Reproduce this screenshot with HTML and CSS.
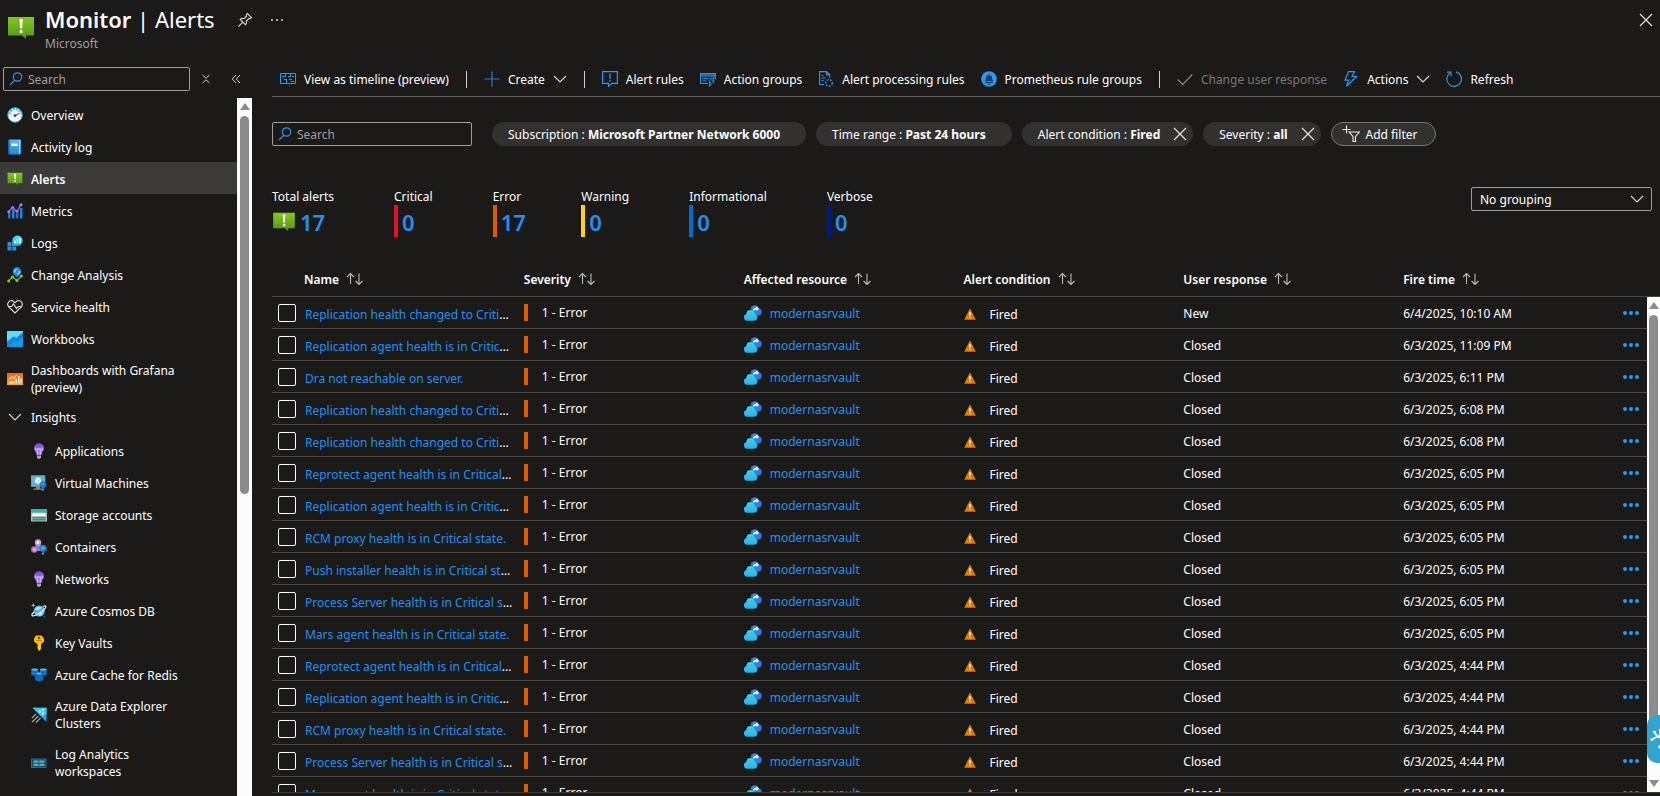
FILE: index.html
```html
<!DOCTYPE html>
<html lang="en">
<head>
    <meta charset="UTF-8">
    <meta name="viewport" content="width=device-width, initial-scale=1.0">
    <title>Monitor | Alerts</title>
    <link rel="stylesheet" href="styles.css">
</head>
<body>

    <svg class="sprite" aria-hidden="true">
        <defs>
            <linearGradient id="green" x1="0" y1="0" x2="0" y2="1"><stop offset="0" stop-color="#82c91e"/><stop offset="1" stop-color="#55921a"/></linearGradient>
            <linearGradient id="book" x1="0" y1="0" x2="0" y2="1"><stop offset="0" stop-color="#5db8f5"/><stop offset="1" stop-color="#1f88dd"/></linearGradient>
            <linearGradient id="purple" x1="0" y1="0" x2="0" y2="1"><stop offset="0" stop-color="#7a4fd0"/><stop offset="1" stop-color="#a67af4"/></linearGradient>
            <linearGradient id="cyan" x1="0" y1="0" x2="0" y2="1"><stop offset="0" stop-color="#50e6ff"/><stop offset="1" stop-color="#1f9fd0"/></linearGradient>
            <linearGradient id="wb" x1="0" y1="0" x2="0" y2="1"><stop offset="0" stop-color="#1aa0ef"/><stop offset="1" stop-color="#0c9ce8"/></linearGradient>
            <linearGradient id="graf" x1="0" y1="0" x2="0" y2="1"><stop offset="0" stop-color="#f0602a"/><stop offset="1" stop-color="#f7a614"/></linearGradient>
            <linearGradient id="cloud" x1="0" y1="0" x2="0" y2="1"><stop offset="0" stop-color="#3fd0f2"/><stop offset="1" stop-color="#28b4dc"/></linearGradient>
        </defs>
        <symbol id="i-alert" viewBox="0 0 28 24">
            <path d="M1 1h26v18.500h-8v3.500l-4-3.500H1z" fill="url(#green)"/>
            <path d="M12.500 3h3.200l-.5 9.500h-2.200zM12.700 14.200h2.800v2.800h-2.800z" fill="#fff"/>
        </symbol>
        <symbol id="i-search" viewBox="0 0 14 14">
            <path d="M5.700 8.300 1 13M12.700 5a4.200 4.200 0 1 1-8.400 0 4.200 4.200 0 0 1 8.400 0z" fill="none" stroke="#3490dc" stroke-width="1.200"/>
        </symbol>
        <symbol id="i-pin" viewBox="0 0 16 16">
            <path d="M10.300 1.500 14.500 5.700 13 6.700 11.800 6.500 9.300 9c.6 1.500.3 2.700-.8 3.800L3.200 7.500c1.100-1.100 2.300-1.400 3.800-.8l2.500-2.500-.2-1.200zM5.600 10.400 1.300 14.700" fill="none" stroke="#ddd" stroke-width="1.100"/>
        </symbol>
        <symbol id="i-more" viewBox="0 0 14 4"><path d="M1 1h2v2H1zM6 1h2v2H6zM11 1h2v2h-2z" fill="#a8a6a4"/></symbol>
        <symbol id="i-close" viewBox="0 0 14 14"><path d="M1 1l12 12M13 1 1 13" fill="none" stroke="#e8e8e8" stroke-width="1.100"/></symbol>
        <symbol id="i-chev" viewBox="0 0 14 8"><path d="M1 1l6 6 6-6" fill="none" stroke="#d8d8d8" stroke-width="1.100"/></symbol>
        <symbol id="i-updown" viewBox="0 0 10 10"><path d="M1.500 1 5 4.200 8.500 1M1.500 9 5 5.800 8.500 9" fill="none" stroke="#ccc"/></symbol>
        <symbol id="i-back" viewBox="0 0 10 10"><path d="M5 1 1.300 5 5 9M9 1 5.300 5 9 9" fill="none" stroke="#ccc"/></symbol>
        <symbol id="i-sort" viewBox="0 0 18 14">
            <path d="M4.500 12V1.500M1 5l3.500-3.500L8 5M13 1.500V12M9.500 9l3.500 3.500L16.500 9" fill="none" stroke="#bbb" stroke-width="1.100"/>
        </symbol>

        <symbol id="i-overview" viewBox="0 0 16 16">
            <circle cx="8" cy="8" r="7.300" fill="#f3f6f9" stroke="#3f8fc4"/>
            <path d="M2.500 7.500a5.500 5.500 0 0 1 11 0" fill="none" stroke="#3ccbf4" stroke-width="2.400" stroke-dasharray="2.200 .9"/>
            <path d="M8 8.500l4-2" stroke="#d13438" stroke-width="1.200"/><circle cx="8" cy="8.500" r="1.500" fill="#555"/>
        </symbol>
        <symbol id="i-log" viewBox="0 0 16 16">
            <rect x="1.500" y=".5" width="12.500" height="15" rx="1" fill="url(#book)"/><path d="M1.500 1.500a1 1 0 0 1 1-1V15.500a1 1 0 0 1-1-1z" fill="#1166aa"/>
            <path d="M12.500 1v14" stroke="#a9dcff"/><rect x="4.500" y="4.500" width="6" height="2.500" fill="#fff"/>
        </symbol>
        <symbol id="i-metrics" viewBox="0 0 16 16">
            <path d="M1 9h2.500v6.500H1zM9 10h2.500v5.500H9z" fill="#2b6cb8"/><path d="M5 6.500h2.500v9H5zM13 5h2.500v10.500H13z" fill="#1b86dc"/>
            <path d="M1.500 9 5.500 4.500l4.500 4L14 1.500" fill="none" stroke="#9a6be0" stroke-width="1.400"/>
            <g fill="#a97bea"><circle cx="1.700" cy="8.800" r="1.500"/><circle cx="5.700" cy="4.500" r="1.500"/><circle cx="10" cy="8.300" r="1.500"/><circle cx="14" cy="1.800" r="1.600"/></g>
        </symbol>
        <symbol id="i-logs" viewBox="0 0 16 16">
            <path d="M.5 7h4v4h-4zM.5 11.600h4V15.500h-4zM5.200 11.600h4V15.500h-4zM5.200 8h4v3h-4z" fill="#2f8ee0"/>
            <path d="M10.500.5a5.200 5.200 0 1 1 0 10.400H5.300V5.700A5.200 5.200 0 0 1 10.500.5z" fill="url(#cyan)"/>
            <path d="M8 5.500v3M10.500 4v4.500M13 3v5.500" stroke="#fff" stroke-width="1.400"/>
        </symbol>
        <symbol id="i-change" viewBox="0 0 16 16">
            <path d="M1.500 14l4-4 4.500 3.500L14.500 9" fill="none" stroke="#6bb22c" stroke-width="1.500"/>
            <g fill="#86cc2c"><circle cx="1.700" cy="14" r="1.500"/><circle cx="5.500" cy="10" r="1.500"/><circle cx="10" cy="13.500" r="1.500"/><circle cx="14.400" cy="9" r="1.500"/></g>
            <path d="M10 0a4.600 4.600 0 0 1 2 8.500L10 10.500 8 8.500A4.600 4.600 0 0 1 10 0z" fill="#1a86dd"/>
            <path d="M7.800 5.500V3.500a1.500 1.500 0 0 1 2.500-.5M12.300 4v2a1.500 1.500 0 0 1-2.500.5" fill="none" stroke="#fff"/>
        </symbol>
        <symbol id="i-health" viewBox="0 0 16 16">
            <path d="M8 14 1.800 7.800a3.700 3.700 0 0 1 0-5 3.700 3.700 0 0 1 5.200 0l1 1 1-1a3.700 3.700 0 0 1 5.200 0 3.700 3.700 0 0 1 0 5zM1 7.500h3.500L6.500 5l3 4.500 1.700-2H15" fill="none" stroke="#e3e3e3" stroke-width="1.100"/>
        </symbol>
        <symbol id="i-workbooks" viewBox="0 0 16 16">
            <rect width="16" height="16" rx=".6" fill="url(#wb)"/><path d="M0 0h16v1.500L9.500 7 6.500 5.500 0 11z" fill="#5fdcfb"/><path d="M0 11l6.500-5.500 3 1.500L16 1.500V6l-6 5-3-1-7 6z" fill="#1b80d8"/>
        </symbol>
        <symbol id="i-grafana" viewBox="0 0 16 16">
            <rect y="2" width="16" height="12" fill="url(#graf)"/><path d="M2 8.500l3-3 2 2 2.500-3.500" fill="none" stroke="#fff"/>
            <path d="M2 10.500h5.500V12.500H2zM8.500 8h1.500v4.500H8.500zM11 5h1.500v7.500H11zM13.300 7.500h1.300v5h-1.300z" fill="#ffe9d8"/>
        </symbol>
        <symbol id="i-bulb" viewBox="0 0 16 16">
            <path d="M8 .3a5 5 0 0 1 5 5c0 2.800-2.300 3.700-2.600 6.700H5.600C5.300 9 3 8.100 3 5.300a5 5 0 0 1 5-5z" fill="url(#purple)"/>
            <path d="M6.700 11.500V5.500M9.300 11.500V5.500M5.300 4.600a1.200 1.200 0 1 0 1.400 1.200h2.600a1.200 1.200 0 1 0 1.400-1.200" fill="none" stroke="#e2d3ff" stroke-width=".9"/>
            <path d="M6 12.500h4v2L9 15.700H7l-1-1.200z" fill="#a9a9a9"/>
        </symbol>
        <symbol id="i-vm" viewBox="0 0 16 16">
            <rect x=".4" y=".8" width="13.500" height="10.500" fill="#59b4d9" stroke="#9aa0a4" stroke-width=".8"/><path d="M5 12h4v1.500h2.500v1.300h-9v-1.300H5z" fill="#8a8a8a"/>
            <path d="M7 2.200l3 1.700v3.300L7 9 4 7.200V3.900z" fill="#fff"/><path d="M4 3.900l3 1.700v3.400M7 5.600l3-1.700" fill="none" stroke="#8fcde8" stroke-width=".8"/>
            <path d="M12 6.200a3.600 3.600 0 0 1 1.600 6.700h-3.200A3.600 3.600 0 0 1 12 6.200z" fill="#1379ce"/><path d="M10.800 13.300h2.400v2.400h-2.400z" fill="#5b7f9e"/><path d="M10.500 9h3" stroke="#7ec4f5"/>
        </symbol>
        <symbol id="i-storage" viewBox="0 0 16 16">
            <rect y="2" width="16" height="12.500" fill="#b8bcbc"/><path d="M0 2h16v3.500H0z" fill="#2fb9ac"/><path d="M1.500 6.500h13V9h-13z" fill="#fff"/><path d="M1.500 10h13v1.500h-13zM1.500 12h13v1.500h-13z" fill="#24968c"/>
        </symbol>
        <symbol id="i-containers" viewBox="0 0 16 16">
            <path d="M7 4 3.500 11H12z" fill="#a975bd" stroke="#a975bd" stroke-width="2"/>
            <circle cx="7" cy="3.500" r="3.200" fill="#c79bd6"/><circle cx="3.300" cy="10.500" r="3.200" fill="#a975bd"/><circle cx="7" cy="3.500" r="1.300" fill="#fff"/><circle cx="3.300" cy="10.500" r="1.200" fill="#efdff5"/>
            <path d="M12 5.700a3.700 3.700 0 0 1 1.600 7h-3.200a3.700 3.700 0 0 1 1.600-7z" fill="#1b86dc"/><path d="M10.800 13.300h2.400v2.400h-2.400z" fill="#5b7f9e"/><path d="M10.500 9h3" stroke="#9fd3fa"/>
        </symbol>
        <symbol id="i-cosmos" viewBox="0 0 16 16">
            <circle cx="8.300" cy="8" r="5.600" fill="#59b3dd"/><path d="M5 5c2-2 4-1 5.500-1S9 7 6.500 7 4 6.500 5 5zM8 10.500l4-1.500-1 3-3 1z" fill="#b9e2f5"/>
            <path d="M12 3.500c3.500-1.500 4 .3.500 3.500C9 10.300 3 13.800 1.200 12.700c-1-.8.500-2.600 2-4" fill="none" stroke="#e8eef2" stroke-width="1.200"/>
            <path d="M2.300 0l.6 1.700 1.700.6-1.700.6L2.300 4.600l-.6-1.700L0 2.300l1.700-.6z" fill="#b8d432"/><circle cx="13.500" cy="13.500" r=".9" fill="#0072c6"/>
        </symbol>
        <symbol id="i-key" viewBox="0 0 16 16">
            <path d="M5 .6h5.500L13 3.500v3L10 9.300V14l-1.700 2L6.500 14V9.300L3 6.500v-3z" fill="#fdb913"/><path d="M8.600 9.500V14.500" stroke="#ffd96b"/><circle cx="8" cy="3" r="1.300" fill="#5c4a16"/><path d="M5 5.500h6" stroke="#c98b05"/>
        </symbol>
        <symbol id="i-redis" viewBox="0 0 16 16">
            <path d="M.3 2.500v5c0 1.500 6.700 1.500 6.700 0v-5zM9 2.500v5c0 1.500 6.700 1.500 6.700 0v-5z" fill="#1173c9"/><path d="M4 5.500v7c0 2.200 8 2.200 8 0v-7z" fill="#0f6cbf"/>
            <ellipse cx="3.700" cy="2.500" rx="3.300" ry="1.100" fill="#4cc4ee"/><ellipse cx="12.300" cy="2.500" rx="3.300" ry="1.100" fill="#4cc4ee"/><ellipse cx="8" cy="6.500" rx="2.600" ry=".9" fill="#4cc4ee"/>
        </symbol>
        <symbol id="i-adx" viewBox="0 0 16 16">
            <path d="M1.500.8H15.500V15z" fill="#2f9fe8"/><path d="M1.500.8H15.500V7L11 10z" fill="#43c6f5"/><path d="M8 3.500h2v2H8zM11 2h2v2h-2zM11 5.500h2v2h-2z" fill="#c3f1ff"/>
            <path d="M1 11l4-4M1 15l6.500-6M5 15.500l4.500-4.500" stroke="#a3a3a3" stroke-width="1.200"/>
        </symbol>
        <symbol id="i-law" viewBox="0 0 16 16">
            <rect x=".5" y="4" width="14.500" height="8.500" fill="#1c4a63" stroke="#2a6b8e"/><path d="M2.500 5.500h5v2.200h-5zM8.300 5.500h5v2.200h-5zM2.500 8.800h5V11h-5zM8.300 8.800h5V11h-5z" fill="#59a9cf"/>
        </symbol>

        <symbol id="i-timeline" viewBox="0 0 16 16">
            <path d="M.5 2.500h15v10H.5z" fill="none" stroke="#2899f5"/>
            <path d="M5.500 3v3M2 5.500h4M10.500 3v2M8 5.500h3M12 5.500h2M4 8.500h3M9 8.500h3M6.500 9v3.500M10.500 10.500h3.500" fill="none" stroke="#2899f5"/>
        </symbol>
        <symbol id="i-plus" viewBox="0 0 16 16"><path d="M8 .5v15M.5 8h15" stroke="#2b7fc7" stroke-width="1.200"/></symbol>
        <symbol id="i-rules" viewBox="0 0 16 16"><path d="M.6.6h14.800v11.800H10L6.500 15.400v-3H.6zM8 2.500v5.500M8 9v1.500" fill="none" stroke="#2899f5" stroke-width="1.200"/></symbol>
        <symbol id="i-groups" viewBox="0 0 16 16">
            <path d="M8 12.500H.6v-10h14.800v6" fill="none" stroke="#2899f5" stroke-width="1.100"/><path d="M.6 2.500h14.800V5H.6z" fill="#1d5f9c" stroke="#2899f5"/>
            <path d="M2.500 7.500h6M2.500 10h4M11 7h3l-1.500 3h2L9 15.500l1.500-4H9z" fill="none" stroke="#2899f5"/>
        </symbol>
        <symbol id="i-processing" viewBox="0 0 16 16">
            <path d="M6 13.500H1.600V.6h7l3 3V7M8.500.6v3h3M3.500 4.500h2M3.500 7h4M3.500 9.500h2" fill="none" stroke="#2899f5" stroke-width="1.100"/><circle cx="11" cy="12" r="3.300" fill="none" stroke="#2899f5" stroke-width="1.200" stroke-dasharray="2 1.200"/>
        </symbol>
        <symbol id="i-prometheus" viewBox="0 0 16 16">
            <circle cx="8" cy="8" r="7.800" fill="#2899f5"/><path d="M4 10V8.500L5 9V6l1-2 .8 2L8 2l1.200 4 .8-2 1 2v3l1-.5V10zM4 10.800h8V12H4zM6 12.800h4c-.5 1.300-3.500 1.300-4 0z" fill="#163a5c"/>
        </symbol>
        <symbol id="i-check" viewBox="0 0 16 16"><path d="M.7 8.500l5 5L15.300 3.500" fill="none" stroke="#8a8a8a" stroke-width="1.200"/></symbol>
        <symbol id="i-bolt" viewBox="0 0 16 16"><path d="M5.500.6h6L9 5.500h4.500L3.500 15.300l2.300-6.200H2z" fill="none" stroke="#2899f5" stroke-width="1.200"/></symbol>
        <symbol id="i-refresh" viewBox="0 0 16 16"><path d="M10 .9A7.300 7.300 0 1 1 3.700 2.200M1 1.200h4V5.200" fill="none" stroke="#2899f5" stroke-width="1.200"/></symbol>
        <symbol id="i-filter" viewBox="0 0 18 18"><path d="M4.500.5v8M.5 4.500h8M7 7h10.500L13.500 11.500v5h-2.500v-5z" fill="none" stroke="#eee" stroke-width="1.100"/></symbol>

        <symbol id="i-vault" viewBox="0 0 18 16">
            <path d="M11 .3a4 4 0 0 1 3.800 3 3.700 3.700 0 0 1-.6 7.300H9V6L6.500 4A4.600 4.600 0 0 1 11 .3z" fill="#2b82e0"/><path d="M9 5c1-2 2.500-2.500 3.500-2.200V1.500l2.500 2.200-2.500 2.200V4.500C11.200 4.400 10.500 5 10 6z" fill="#fff"/>
            <path d="M6.500 5a4.300 4.300 0 0 1 4.200 3.700 3.500 3.500 0 0 1 2.500 3.600A3.400 3.400 0 0 1 10 15.800H3.600A3.500 3.500 0 0 1 2.300 9 4.300 4.300 0 0 1 6.500 5z" fill="url(#cloud)"/>
        </symbol>
        <symbol id="i-warn" viewBox="0 0 12 12"><path d="M6 .3 11.800 11.700H.2z" fill="#e07a0c"/><path d="M5.400 4h1.200v4H5.400zM5.400 9h1.200v1.300H5.400z" fill="#fff"/></symbol>
        <symbol id="i-help" viewBox="0 0 22 24"><path d="M1 13l13-7M4.500 5l3 5M10 2v8M8 10l7 2" fill="none" stroke="#fff" stroke-width="1.600"/><circle cx="4.500" cy="5" r="1.500" fill="#fff"/><circle cx="2" cy="12.500" r="1.500" fill="#fff"/><circle cx="10" cy="20" r="1.800" fill="#fff"/></symbol>
    </svg>

    <header class="page-header">
        <svg class="header-icon"><use href="#i-alert"/></svg>
        <div class="header-text">
            <h1><b>Monitor</b> | Alerts</h1>
            <p>Microsoft</p>
        </div>
        <div class="header-tools">
            <button aria-label="Pin"><svg class="icon"><use href="#i-pin"/></svg></button>
            <button aria-label="More"><svg class="icon-more"><use href="#i-more"/></svg></button>
        </div>
        <button class="close-page" aria-label="Close"><svg class="icon-close"><use href="#i-close"/></svg></button>
    </header>

    <div class="layout">
        <aside class="sidebar">
            <div class="menu-tools">
                <label class="search-box menu-search">
                    <svg class="icon-search"><use href="#i-search"/></svg>
                    <input type="text" placeholder="Search" aria-label="Search menu">
                </label>
                <button aria-label="Collapse groups"><svg class="icon-small"><use href="#i-updown"/></svg></button>
                <button aria-label="Hide menu"><svg class="icon-small"><use href="#i-back"/></svg></button>
            </div>
            <div class="menu-body">
                <nav class="menu">
                    <a href="#"><svg class="icon"><use href="#i-overview"/></svg><span>Overview</span></a>
                    <a href="#"><svg class="icon"><use href="#i-log"/></svg><span>Activity log</span></a>
                    <a href="#" class="active"><svg class="icon"><use href="#i-alert"/></svg><span>Alerts</span></a>
                    <a href="#"><svg class="icon"><use href="#i-metrics"/></svg><span>Metrics</span></a>
                    <a href="#"><svg class="icon"><use href="#i-logs"/></svg><span>Logs</span></a>
                    <a href="#"><svg class="icon"><use href="#i-change"/></svg><span>Change Analysis</span></a>
                    <a href="#"><svg class="icon"><use href="#i-health"/></svg><span>Service health</span></a>
                    <a href="#"><svg class="icon"><use href="#i-workbooks"/></svg><span>Workbooks</span></a>
                    <a href="#" class="tall"><svg class="icon"><use href="#i-grafana"/></svg><span>Dashboards with Grafana (preview)</span></a>
                    <button class="menu-group" aria-expanded="true"><svg class="icon-chev"><use href="#i-chev"/></svg><span>Insights</span></button>
                    <div class="submenu">
                        <a href="#"><svg class="icon"><use href="#i-bulb"/></svg><span>Applications</span></a>
                        <a href="#"><svg class="icon"><use href="#i-vm"/></svg><span>Virtual Machines</span></a>
                        <a href="#"><svg class="icon"><use href="#i-storage"/></svg><span>Storage accounts</span></a>
                        <a href="#"><svg class="icon"><use href="#i-containers"/></svg><span>Containers</span></a>
                        <a href="#"><svg class="icon"><use href="#i-bulb"/></svg><span>Networks</span></a>
                        <a href="#"><svg class="icon"><use href="#i-cosmos"/></svg><span>Azure Cosmos DB</span></a>
                        <a href="#"><svg class="icon"><use href="#i-key"/></svg><span>Key Vaults</span></a>
                        <a href="#"><svg class="icon"><use href="#i-redis"/></svg><span>Azure Cache for Redis</span></a>
                        <a href="#" class="tall"><svg class="icon"><use href="#i-adx"/></svg><span>Azure Data Explorer Clusters</span></a>
                        <a href="#" class="tall"><svg class="icon"><use href="#i-law"/></svg><span>Log Analytics workspaces</span></a>
                    </div>
                </nav>
                <div class="scrollbar menu-scroll">
                    <span class="arrow-up"></span>
                    <span class="thumb"></span>
                </div>
            </div>
        </aside>

        <main class="content">
            <div class="toolbar">
                <button><svg class="icon"><use href="#i-timeline"/></svg>View as timeline (preview)</button>
                <span class="divider"></span>
                <button><svg class="icon"><use href="#i-plus"/></svg>Create<svg class="icon-chev"><use href="#i-chev"/></svg></button>
                <span class="divider"></span>
                <button><svg class="icon"><use href="#i-rules"/></svg>Alert rules</button>
                <button><svg class="icon"><use href="#i-groups"/></svg>Action groups</button>
                <button><svg class="icon"><use href="#i-processing"/></svg>Alert processing rules</button>
                <button><svg class="icon"><use href="#i-prometheus"/></svg>Prometheus rule groups</button>
                <span class="divider"></span>
                <button disabled><svg class="icon"><use href="#i-check"/></svg>Change user response</button>
                <button><svg class="icon"><use href="#i-bolt"/></svg>Actions<svg class="icon-chev"><use href="#i-chev"/></svg></button>
                <button><svg class="icon"><use href="#i-refresh"/></svg>Refresh</button>
            </div>

            <div class="filters">
                <label class="search-box filter-search">
                    <svg class="icon-search"><use href="#i-search"/></svg>
                    <input type="text" placeholder="Search" aria-label="Search alerts">
                </label>
                <button class="pill">Subscription : <b>Microsoft Partner Network 6000</b></button>
                <button class="pill">Time range : <b>Past 24 hours</b></button>
                <button class="pill closable">Alert condition : <b>Fired</b><svg class="icon-close"><use href="#i-close"/></svg></button>
                <button class="pill closable">Severity : <b>all</b><svg class="icon-close"><use href="#i-close"/></svg></button>
                <button class="pill add"><svg class="icon-filter"><use href="#i-filter"/></svg>Add filter</button>
            </div>

            <div class="summary">
                <div class="stat"><span>Total alerts</span><a href="#" class="total"><svg class="icon-total"><use href="#i-alert"/></svg>17</a></div>
                <div class="stat"><span>Critical</span><a href="#" class="critical">0</a></div>
                <div class="stat"><span>Error</span><a href="#" class="error">17</a></div>
                <div class="stat"><span>Warning</span><a href="#" class="warning">0</a></div>
                <div class="stat"><span>Informational</span><a href="#" class="info">0</a></div>
                <div class="stat"><span>Verbose</span><a href="#" class="verbose">0</a></div>
                <div class="grouping">
                    <select aria-label="Grouping">
                        <option>No grouping</option>
                    </select>
                    <svg class="icon-chev"><use href="#i-chev"/></svg>
                </div>
            </div>

            <div class="grid-wrap">
                <table class="alerts">
                    <thead>
                        <tr>
                            <th></th>
                            <th>Name<svg class="icon-sort"><use href="#i-sort"/></svg></th>
                            <th>Severity<svg class="icon-sort"><use href="#i-sort"/></svg></th>
                            <th>Affected resource<svg class="icon-sort"><use href="#i-sort"/></svg></th>
                            <th>Alert condition<svg class="icon-sort"><use href="#i-sort"/></svg></th>
                            <th>User response<svg class="icon-sort"><use href="#i-sort"/></svg></th>
                            <th>Fire time<svg class="icon-sort"><use href="#i-sort"/></svg></th>
                            <th></th>
                        </tr>
                    </thead>
                    <tbody id="alertRows"></tbody>
                </table>
                <div class="scrollbar grid-scroll">
                    <span class="arrow-up"></span>
                    <span class="thumb"></span>
                    <span class="arrow-down"></span>
                </div>
                <button class="help-tab" aria-label="Help"><svg><use href="#i-help"/></svg></button>
            </div>
        </main>
    </div>

    <script>
        const alerts = [
            ["Replication health changed to Critical.", "New", "6/4/2025, 10:10 AM"],
            ["Replication agent health is in Critical state.", "Closed", "6/3/2025, 11:09 PM"],
            ["Dra not reachable on server.", "Closed", "6/3/2025, 6:11 PM"],
            ["Replication health changed to Critical.", "Closed", "6/3/2025, 6:08 PM"],
            ["Replication health changed to Critical.", "Closed", "6/3/2025, 6:08 PM"],
            ["Reprotect agent health is in Critical state.", "Closed", "6/3/2025, 6:05 PM"],
            ["Replication agent health is in Critical state.", "Closed", "6/3/2025, 6:05 PM"],
            ["RCM proxy health is in Critical state.", "Closed", "6/3/2025, 6:05 PM"],
            ["Push installer health is in Critical state.", "Closed", "6/3/2025, 6:05 PM"],
            ["Process Server health is in Critical state.", "Closed", "6/3/2025, 6:05 PM"],
            ["Mars agent health is in Critical state.", "Closed", "6/3/2025, 6:05 PM"],
            ["Reprotect agent health is in Critical state.", "Closed", "6/3/2025, 4:44 PM"],
            ["Replication agent health is in Critical state.", "Closed", "6/3/2025, 4:44 PM"],
            ["RCM proxy health is in Critical state.", "Closed", "6/3/2025, 4:44 PM"],
            ["Process Server health is in Critical state.", "Closed", "6/3/2025, 4:44 PM"],
            ["Mars agent health is in Critical state.", "Closed", "6/3/2025, 4:44 PM"]
        ];

        document.getElementById("alertRows").innerHTML = alerts.map(([name, response, time]) => `
            <tr>
                <td><input type="checkbox" aria-label="Select alert"></td>
                <td class="name"><a href="#">${name}</a></td>
                <td class="severity">1 - Error</td>
                <td class="resource"><svg class="icon-vault"><use href="#i-vault"/></svg><a href="#">modernasrvault</a></td>
                <td class="condition"><svg class="icon-warn"><use href="#i-warn"/></svg>Fired</td>
                <td class="plain">${response}</td>
                <td class="plain">${time}</td>
                <td><button class="row-menu" aria-label="More actions"><i></i><i></i><i></i></button></td>
            </tr>`).join("");
    </script>

</body>
</html>
```
FILE: styles.css
```css
* {
    margin: 0;
    padding: 0;
    box-sizing: border-box;
}

body {
    background: #1b1a19;
    color: #fff;
    font-family: "Noto Sans", "Open Sans", sans-serif;
    font-size: 12px;
    line-height: 17px;
    display: flex;
    flex-direction: column;
    height: 100vh;
    overflow: hidden;
}

button, input, select {
    font: inherit;
    color: inherit;
    background: none;
    border: none;
    outline: none;
}

button {
    cursor: pointer;
}

a {
    color: #2190f5;
    text-decoration: none;
}

svg {
    display: block;
    flex: none;
}

.sprite {
    position: absolute;
    width: 0;
    height: 0;
}

.icon { width: 16px; height: 16px; }
.icon-small { width: 10px; height: 10px; }
.icon-more { width: 14px; height: 4px; }
.icon-search { width: 14px; height: 14px; }
.icon-close { width: 14px; height: 14px; }
.icon-chev { width: 14px; height: 8px; }
.icon-sort { width: 18px; height: 14px; }
.icon-filter { width: 18px; height: 18px; }
.icon-total { width: 24px; height: 20px; }
.icon-vault { width: 18px; height: 16px; }
.icon-warn { width: 12px; height: 12px; }

/* header */
.page-header {
    display: flex;
    align-items: flex-start;
    height: 67px;
    padding: 4px 7px 0 7px;
}

.header-icon {
    width: 28px;
    height: 24px;
    margin-top: 12px;
}

.header-text {
    margin-left: 10px;
}

.header-text h1 {
    font-size: 22px;
    line-height: 30px;
    font-weight: 400;
}

.header-text b {
    font-weight: 600;
}

.header-text p {
    color: #a19f9d;
    font-size: 12px;
    line-height: 20px;
}

.header-tools {
    display: flex;
    align-items: center;
    gap: 17px;
    height: 32px;
    margin-left: 22px;
}

.close-page {
    margin: 9px 0 0 auto;
}

.layout {
    flex: 1;
    display: flex;
    min-height: 0;
}

/* sidebar */
.sidebar {
    width: 252px;
    flex: none;
    display: flex;
    flex-direction: column;
}

.menu-tools {
    display: flex;
    align-items: center;
    gap: 20px;
    height: 31px;
    padding: 0 0 7px 3px;
}

.menu-tools button {
    width: 10px;
}

.search-box {
    display: flex;
    align-items: center;
    gap: 5px;
    height: 24px;
    padding-left: 5px;
    border: 1px solid #a19f9d;
    border-radius: 2px;
}

.search-box input {
    width: 100%;
    min-width: 0;
}

.search-box input::placeholder {
    color: #a19f9d;
}

.menu-search {
    width: 187px;
    margin-right: -9px;
}

.menu-body {
    flex: 1;
    display: flex;
    min-height: 0;
}

.menu {
    flex: 1;
    overflow: hidden;
}

.menu a, .menu-group {
    display: flex;
    align-items: center;
    gap: 8px;
    width: 100%;
    height: 32px;
    padding: 2px 32px 0 7px;
    color: #fff;
    text-align: left;
}

.menu a.active {
    background: #3b3a39;
    font-weight: 600;
}

.menu a.tall {
    height: 48px;
}

.menu .menu-group {
    height: 28px;
    padding-left: 8px;
    gap: 9px;
    margin-bottom: 4px;
}

.menu .submenu a {
    padding-left: 31px;
    padding-right: 40px;
}

/* scrollbars */
.scrollbar {
    background: #fcfcfc;
    display: flex;
    flex-direction: column;
    align-items: center;
    padding: 5px 0;
}

.menu-scroll {
    width: 15px;
}

.thumb {
    width: 9px;
    border-radius: 5px;
    background: #8b8b8b;
    margin-top: 6px;
}

.menu-scroll .thumb {
    height: 55%;
}

.arrow-up, .arrow-down {
    border: 5px solid transparent;
}

.arrow-up {
    border-top: none;
    border-bottom: 7px solid #8b8b8b;
}

.arrow-down {
    border-bottom: none;
    border-top: 7px solid #8b8b8b;
    margin-top: auto;
}

/* toolbar */
.content {
    flex: 1;
    min-width: 0;
    padding-left: 20px;
    display: flex;
    flex-direction: column;
}

.toolbar {
    display: flex;
    align-items: center;
    height: 30px;
    padding-bottom: 5px;
    border-bottom: 1px solid #605e5c;
}

.toolbar button {
    display: flex;
    align-items: center;
    gap: 8px;
    padding: 0 8px;
    white-space: nowrap;
}

.toolbar button:disabled {
    color: #797775;
}

.divider {
    width: 1px;
    height: 17px;
    margin: 0 9px;
    background: #d2d0ce;
}

/* filters */
.filters {
    display: flex;
    align-items: center;
    gap: 10px;
    margin-top: 25px;
}

.filter-search {
    width: 200px;
    margin-right: 10px;
}

.pill {
    display: flex;
    align-items: center;
    height: 24px;
    padding: 0 26px 0 16px;
    border-radius: 12px;
    background: #323130;
    white-space: pre;
}

.pill.closable {
    padding-right: 6px;
}

.pill .icon-close {
    margin-left: 13px;
}

.pill.add {
    gap: 6px;
    padding: 0 18px 0 10px;
    border: 1px solid #797775;
}

/* summary */
.summary {
    display: flex;
    align-items: flex-start;
    gap: 60px;
    margin-top: 41px;
    padding-right: 8px;
}

.stat {
    padding-top: 1px;
}

.stat a {
    display: flex;
    align-items: center;
    width: 0;
    height: 32px;
    padding: 2px 0 0 4px;
    border-left: 4px solid;
    font-size: 22px;
    font-weight: 600;
}

.stat a.total {
    border: none;
    padding-left: 0;
    gap: 4px;
}

.stat .critical { border-color: #e81123; }
.stat .error { border-color: #db5c00; }
.stat .warning { border-color: #fcd116; }
.stat .info { border-color: #0072c6; }
.stat .verbose { border-color: #00188f; }

.grouping {
    position: relative;
    width: 181px;
    margin-left: auto;
}

.grouping select {
    appearance: none;
    display: block;
    width: 100%;
    height: 24px;
    padding-left: 8px;
    border: 1px solid #a19f9d;
    border-radius: 2px;
}

.grouping .icon-chev {
    position: absolute;
    right: 8px;
    top: 8px;
    pointer-events: none;
}

/* alerts table */
.grid-wrap {
    position: relative;
    flex: 1;
    min-height: 0;
    margin: 25px 0 3px;
    border-bottom: 1px solid #3b3a39;
    display: flex;
}

.alerts {
    flex: 1;
    display: flex;
    flex-direction: column;
    min-width: 0;
}

.alerts thead {
    display: block;
    margin-right: -13px;
    padding-right: 13px;
    border-bottom: 1px solid #484644;
}

.alerts tbody {
    display: block;
    flex: 1;
    min-height: 0;
    overflow: hidden;
}

.alerts tr {
    display: grid;
    grid-template-columns: 32px repeat(6, 1fr) 24px;
    height: 32px;
    align-items: center;
}

.alerts thead tr {
    height: 34px;
}

.alerts tbody tr {
    border-bottom: 1px solid #484644;
}

.alerts th {
    display: flex;
    align-items: center;
    gap: 7px;
    font-weight: 600;
    text-align: left;
}

.alerts td {
    min-width: 0;
    white-space: nowrap;
}

.alerts input {
    appearance: none;
    display: block;
    width: 18px;
    height: 18px;
    margin-left: 6px;
    border: 1px solid #fff;
    border-radius: 2px;
}

.alerts .name {
    overflow: hidden;
    text-overflow: ellipsis;
    margin-right: 10px;
    padding: 3px 0 0 1px;
}

.alerts .severity {
    border-left: 4px solid #db5c00;
    padding-left: 14px;
}

.alerts .plain {
    padding-top: 1px;
}

.alerts .resource {
    display: flex;
    align-items: center;
    gap: 8px;
}

.alerts .resource a {
    padding-top: 2px;
}

.alerts .condition {
    display: flex;
    align-items: center;
    gap: 13px;
    padding: 3px 0 0 1px;
}

.row-menu {
    display: flex;
    gap: 2px;
}

.row-menu i {
    width: 4px;
    height: 4px;
    border-radius: 50%;
    background: #2899f5;
}

.grid-scroll {
    width: 13px;
    margin-top: 35px;
}

.grid-scroll .thumb {
    height: 84%;
}

.help-tab {
    position: absolute;
    right: 0;
    bottom: 29px;
    width: 13px;
    height: 48px;
    overflow: hidden;
    border-radius: 10px 0 0 10px;
    background: #33a3d1;
}

.help-tab svg {
    width: 22px;
    height: 24px;
    margin-left: 3px;
}
```
